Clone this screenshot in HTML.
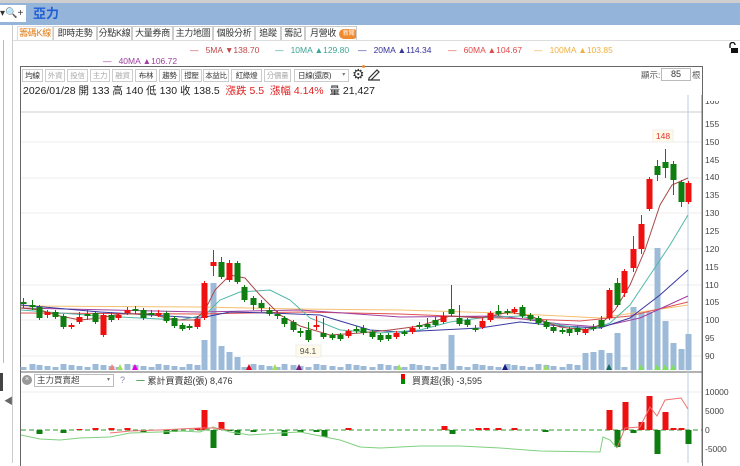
<!DOCTYPE html>
<html><head><meta charset="utf-8">
<style>
*{margin:0;padding:0;box-sizing:border-box}
body{width:740px;height:463px;overflow:hidden;background:#fff;font-family:"Liberation Sans","Noto Sans CJK TC",sans-serif;position:relative;color:#333}
.a{position:absolute;white-space:nowrap}
.tab{position:absolute;top:26px;height:15px;border:1px solid #ccc;border-bottom:none;font-size:9px;line-height:13px;text-align:center;color:#333;background:#fff;white-space:nowrap;overflow:hidden;letter-spacing:-0.3px}
.tb{position:absolute;top:69px;height:13px;border:1px solid #ccc;font-size:7.5px;line-height:11px;text-align:center;color:#333;background:#fff;white-space:nowrap;overflow:hidden;letter-spacing:-0.3px}
.g{color:#aaa}
.ml{font-size:8.5px;position:absolute;top:45px;white-space:nowrap}
.ax{position:absolute;left:705px;font-size:8.5px;color:#444}
</style></head><body>
<div class="a" style="left:0;top:0;width:740px;height:3px;background:#cfcfcf"></div>
<div class="a" style="left:0;top:3px;width:740px;height:22px;background:#95b4d9"></div>
<div class="a" style="left:0;top:5px;width:26px;height:17px;background:#fff;font-size:10px;line-height:17px">▾<span style="color:#557">🔍</span>+</div>
<div class="a" style="left:33px;top:5px;font-size:13px;font-weight:bold;color:#1f5fd6;line-height:17px">亞力</div>
<div class="a" style="left:3px;top:40px;width:1px;height:323px;background:#bbb"></div>
<div class="a" style="left:12px;top:25px;width:1px;height:438px;background:#ccc"></div>
<div class="a" style="left:0;top:373px;width:3px;height:18px;background:#444"></div>
<div class="a" style="left:4px;top:394px;font-size:9px;color:#666">◀</div>
<div class="tab" style="left:17px;width:36px;color:#e07a10;border-color:#ddd">籌碼K線</div>
<div class="tab" style="left:53px;width:44px">即時走勢</div>
<div class="tab" style="left:97px;width:35px">分點K線</div>
<div class="tab" style="left:132px;width:41px">大量券商</div>
<div class="tab" style="left:173px;width:40px">主力地圖</div>
<div class="tab" style="left:213px;width:42px">個股分析</div>
<div class="tab" style="left:255px;width:26px">追蹤</div>
<div class="tab" style="left:281px;width:24px">籌記</div>
<div class="tab" style="left:305px;width:52px;text-align:left;padding-left:4px">月營收<span style="display:inline-block;margin-left:3px;width:19px;height:10px;border-radius:5px;background:#f08a30;color:#fff;font-size:6px;line-height:10px;text-align:center;vertical-align:middle">新聞</span></div>
<div class="a" style="left:13px;top:40px;width:727px;height:1px;background:#ddd"></div>
<div class="ml" style="left:190px;color:#c04848">—&nbsp;&nbsp;&nbsp;5MA <span>▼</span>138.70</div>
<div class="ml" style="left:275px;color:#3aa593">—&nbsp;&nbsp;&nbsp;10MA ▲129.80</div>
<div class="ml" style="left:358px;color:#333399">—&nbsp;&nbsp;&nbsp;20MA ▲114.34</div>
<div class="ml" style="left:448px;color:#e04848">—&nbsp;&nbsp;&nbsp;60MA ▲104.67</div>
<div class="ml" style="left:534px;color:#f0b040">—&nbsp;&nbsp;&nbsp;100MA ▲103.85</div>
<div class="ml" style="left:103px;top:56px;color:#a040a0">—&nbsp;&nbsp;&nbsp;40MA ▲106.72</div>
<svg class="a" style="left:727px;top:42px" width="12" height="12"><path d="M3 6V3a2.5 2.5 0 0 1 5 0" fill="none" stroke="#111" stroke-width="1.3"/><rect x="4" y="6" width="7" height="5" fill="#111"/></svg>
<div class="a" style="left:20px;top:66px;width:683px;height:400px;border:1px solid #666;border-bottom:none"></div>
<div class="tb" style="left:22px;width:21px">均線</div>
<div class="tb g" style="left:45px;width:20px">外資</div>
<div class="tb g" style="left:67px;width:21px">投信</div>
<div class="tb g" style="left:90px;width:20px">主力</div>
<div class="tb g" style="left:112px;width:21px">融資</div>
<div class="tb" style="left:135px;width:22px">布林</div>
<div class="tb" style="left:159px;width:21px">趨勢</div>
<div class="tb" style="left:181px;width:21px">撐壓</div>
<div class="tb" style="left:203px;width:26px">本益比</div>
<div class="tb" style="left:231px;width:31px">紅綠燈</div>
<div class="tb g" style="left:264px;width:27px">分價量</div>
<div class="tb" style="left:294px;width:55px;text-align:left;padding-left:3px">日線(還原)<span style="position:absolute;right:3px;font-size:6px;color:#777">▾</span></div>
<div class="a" style="left:352px;top:66px;font-size:14px;color:#333">⚙</div>
<div class="a" style="left:362px;top:65px;width:3px;height:3px;border-radius:2px;background:#f08a30"></div>
<svg class="a" style="left:367px;top:67px" width="14" height="14"><path d="M2 11L10 3l2 2-8 8H2z M1 13h12" fill="none" stroke="#333" stroke-width="1.2"/></svg>
<div class="a" style="left:641px;top:69px;font-size:8.5px;color:#555">顯示:</div>
<div class="a" style="left:661px;top:68px;width:30px;height:13px;border:1px solid #bbb;font-size:9px;text-align:center;line-height:11px">85</div>
<div class="a" style="left:692px;top:69px;font-size:8.5px;color:#555">根</div>
<div class="a" style="left:23px;top:83px;font-size:10.5px;color:#222">2026/01/28 開 133 高 140 低 130 收 138.5 <span style="color:#e02020">&nbsp;漲跌 5.5&nbsp; 漲幅 4.14%</span>&nbsp; 量 21,427</div>
<div class="ax" style="top:101px;height:6px;overflow:hidden;line-height:0">160</div>
<div class="ax" style="top:119px">155</div><div class="ax" style="top:137px">150</div><div class="ax" style="top:155px">145</div>
<div class="ax" style="top:172px">140</div><div class="ax" style="top:190px">135</div><div class="ax" style="top:208px">130</div>
<div class="ax" style="top:226px">125</div><div class="ax" style="top:244px">120</div><div class="ax" style="top:262px">115</div>
<div class="ax" style="top:280px">110</div><div class="ax" style="top:297px">105</div><div class="ax" style="top:315px">100</div>
<div class="ax" style="top:333px">95</div><div class="ax" style="top:351px">90</div>
<div class="ax" style="top:387px">10000</div><div class="ax" style="top:406px">5000</div><div class="ax" style="top:425px">0</div><div class="ax" style="top:444px">-5000</div>
<div class="a" style="left:22px;top:375px;width:10px;height:10px;border-radius:5px;background:#999;color:#fff;font-size:7px;text-align:center;line-height:10px">×</div>
<div class="a" style="left:34px;top:374px;width:80px;height:13px;border:1px solid #bbb;font-size:8.5px;line-height:11px;padding-left:2px;color:#444">主力買賣超<span style="position:absolute;right:3px;font-size:6px;color:#777">▾</span></div>
<div class="a" style="left:120px;top:375px;font-size:9px;color:#88a">?</div>
<div class="a" style="left:136px;top:374px;font-size:9px;color:#333"><span style="color:#2a8a2a">一</span> 累計買賣超(張) 8,476</div>
<div class="a" style="left:401px;top:374px;width:4px;height:5px;background:#e00"></div>
<div class="a" style="left:401px;top:379px;width:4px;height:5px;background:#080"></div>
<div class="a" style="left:412px;top:374px;font-size:9px;color:#333">買賣超(張) -3,595</div>
<svg class="a" style="left:0;top:0" width="740" height="463" id="s">
<g stroke="#eee" stroke-width="1">
<line x1="21" y1="142" x2="702" y2="142"/><line x1="21" y1="178" x2="702" y2="178"/><line x1="21" y1="213" x2="702" y2="213"/><line x1="21" y1="249" x2="702" y2="249"/><line x1="21" y1="285" x2="702" y2="285"/><line x1="21" y1="320" x2="702" y2="320"/><line x1="21" y1="356" x2="702" y2="356"/><line x1="21" y1="392" x2="702" y2="392"/>
</g>
<line x1="21" y1="112" x2="702" y2="112" stroke="#ccc"/>
<line x1="702" y1="95" x2="702" y2="463" stroke="#777"/>
<line x1="21" y1="372" x2="702" y2="372" stroke="#666"/>
<line x1="688" y1="95" x2="688" y2="463" stroke="#b8cce0"/>
<g id="vol" fill="#9dbbd8"></g>
<g id="ma" fill="none" stroke-width="1"></g>
<g id="cd"></g>
<g id="low"></g>
<rect x="653" y="130" width="20" height="12" fill="#fffbe8" stroke="#eee"/>
<text x="663" y="139" font-size="8.5" fill="#e03030" text-anchor="middle" font-family="Liberation Sans">148</text>
<rect x="296" y="345" width="25" height="12" fill="#fffbe8" stroke="#eee"/>
<text x="308" y="354" font-size="8.5" fill="#555" text-anchor="middle" font-family="Liberation Sans">94.1</text>
</svg>
<script>
var NS="http://www.w3.org/2000/svg";
function el(p,t,a){var e=document.createElementNS(NS,t);for(var k in a)e.setAttribute(k,a[k]);document.getElementById(p).appendChild(e);return e;}
var C=[[23,302,304,'d',298,308],[32,305,307,'d',300,310],[39,307,318,'g',305,320],[47,312,315,'r',310,318],[55,312,317,'g',310,319],[63,316,327,'g',314,329],[71,325,327,'r',323,329],[79,317,322,'r',312,324],[87,314,316,'d',310,320],[95,313,322,'g',311,324],[103,315,335,'r',313,337],[111,315,320,'g',312,322],[118,315,318,'r',313,320],[127,310,313,'r',307,315],[135,309,311,'d',306,314],[143,310,318,'g',308,320],[151,313,315,'d',310,317],[158,313,315,'r',310,317],[166,313,321,'g',311,323],[174,318,326,'g',316,328],[182,325,329,'g',323,331],[189,326,328,'g',324,330],[197,319,327,'r',316,329],[204,283,318,'r',281,320],[213,262,266,'r',250,276],[221,262,277,'g',257,279],[229,263,280,'r',260,282],[237,263,282,'g',261,284],[244,287,300,'g',285,302],[253,298,305,'g',296,310],[261,303,308,'g',300,312],[269,310,314,'g',307,316],[277,314,316,'d',311,319],[284,318,324,'g',316,327],[293,322,330,'g',320,332],[300,331,333,'d',328,337],[308,330,340,'g',322,342],[316,325,327,'r',316,330],[323,333,337,'g',318,339],[332,335,338,'g',333,340],[340,335,339,'g',333,341],[348,331,336,'r',329,338],[356,329,331,'g',326,333],[363,328,333,'g',325,335],[372,332,337,'g',330,339],[380,335,340,'g',333,342],[388,335,339,'g',333,341],[396,333,337,'r',331,339],[404,332,334,'d',330,336],[412,328,332,'r',326,334],[419,325,327,'d',322,329],[427,324,327,'g',318,329],[435,320,325,'g',317,327],[443,316,322,'r',312,324],[451,309,314,'g',285,316],[459,318,324,'g',305,326],[467,320,325,'g',318,327],[475,328,330,'g',325,332],[482,321,327,'r',318,329],[490,313,320,'r',311,322],[498,311,314,'g',305,316],[507,311,313,'d',309,315],[514,309,312,'r',307,314],[522,307,316,'g',305,318],[530,315,319,'g',313,321],[538,318,323,'g',316,325],[546,322,327,'g',320,329],[553,327,331,'g',325,333],[562,330,332,'d',328,334],[569,329,333,'g',327,336],[577,328,332,'g',326,335],[585,329,333,'r',327,335],[593,327,329,'d',324,331],[601,320,327,'g',316,329],[609,290,318,'r',288,320],[617,283,305,'g',278,307],[624,271,293,'r',269,297],[633,249,268,'r',236,272],[641,224,249,'r',215,254],[649,179,209,'r',177,211],[657,166,175,'g',160,181],[665,162,168,'g',149,178],[673,164,180,'g',161,195],[681,182,202,'g',180,207],[688,183,202,'r',181,204]];
C.forEach(function(c){var col=c[3]=='r'?'#ef1010':'#0f7d0f';
el('cd','line',{x1:c[0]+0.5,x2:c[0]+0.5,y1:c[4],y2:c[5],stroke:col,'stroke-width':1});
var h=Math.max(2,c[2]-c[1]);el('cd','rect',{x:c[0]-2.5,y:c[1],width:6,height:h,fill:col});});
var V={204:30,213:87,221:24,229:18,237:13,451:35,585:17,593:18,601:20,609:17,617:37,625:57,633:63,641:58,649:58,657:122,665:49,673:27,681:21,688:36};
C.forEach(function(c,i){var h=V[c[0]]||(3+((i*7)%4));el('vol','rect',{x:c[0]-2.5,y:370-h,width:6,height:h});});
[[112,'#f08080'],[135,'#e000e0'],[120,'#a0e060'],[249,'#e0001f'],[275,'#a0e060'],[299,'#7a1a7a'],[399,'#9be060'],[505,'#1a1a80'],[546,'#9be060'],[609,'#1a6a60'],[641,'#7fe060'],[657,'#7fe060'],[665,'#7fe060'],[673,'#7fe060']].forEach(function(t){el('vol','path',{d:'M'+(t[0]-3)+' 370L'+t[0]+' 364L'+(t[0]+3)+' 370Z',fill:t[1]});});
function pl(pts,col){el('ma','polyline',{points:pts,stroke:col});}
pl("21,306 200,307 300,309 400,310 500,313 600,318 688,305","#f5c070");
pl("21,313 200,314 300,312 400,314 500,318 580,321 630,316 688,302","#e05050");
pl("21,308 200,312 300,310 400,317 500,316 560,324 600,327 640,318 688,296","#a040a0");
pl("21,305 100,312 200,318 230,312 270,313 320,315 370,330 400,332 440,330 480,328 520,322 560,326 600,328 630,318 660,295 688,270","#3838a0");
pl("21,310 100,316 180,320 205,315 220,300 240,292 270,290 290,300 310,318 340,330 380,333 420,330 450,322 480,318 520,316 560,325 590,330 610,323 630,305 650,275 670,245 688,215","#50b8a8");
pl("21,308 40,310 60,316 80,320 100,318 120,314 150,314 175,320 195,320 205,310 215,290 230,275 245,278 260,295 280,315 300,326 330,335 360,333 390,330 420,326 450,316 480,318 510,312 530,316 560,327 585,330 600,325 615,310 630,285 645,250 660,205 672,185 688,178","#a84848");
el('low','line',{x1:21,x2:702,y1:430,y2:430,stroke:'#2a9a2a','stroke-dasharray':'5,3','stroke-width':1});
var B=[[39,430,434,'g'],[63,430,433,'g'],[79,429,430,'r'],[95,428,430,'r'],[111,428,430,'r'],[127,428,430,'r'],[143,430,432,'g'],[166,430,434,'g'],[174,430,432,'g'],[197,428,430,'r'],[204,410,430,'r'],[213,430,448,'g'],[221,422,430,'r'],[229,430,431,'g'],[237,430,435,'g'],[253,430,432,'g'],[284,430,436,'g'],[300,430,432,'g'],[316,430,432,'g'],[324,430,437,'g'],[348,428,430,'r'],[444,426,430,'r'],[452,430,434,'g'],[478,428,430,'r'],[486,428,430,'r'],[498,428,430,'r'],[514,428,430,'r'],[545,430,432,'g'],[609,410,430,'r'],[617,430,447,'g'],[625,402,430,'r'],[633,430,433,'g'],[641,422,430,'r'],[649,396,430,'r'],[657,430,454,'g'],[665,412,430,'r'],[673,428,430,'r'],[681,428,430,'r'],[688,430,444,'g']];
B.forEach(function(b){el('low','rect',{x:b[0]-2.5,y:b[1],width:6,height:b[2]-b[1],fill:b[3]=='r'?'#ef1010':'#0f7d0f'});});
el('low','polyline',{points:"21,435 40,439 60,440 80,438 110,437 130,433 160,432 180,431 200,432 213,427 230,432 250,435 280,433 300,432 320,436 340,440 360,447 380,448 420,446 460,446 500,448 540,451 600,452 603,437 610,440 617,448",fill:'none',stroke:'#80d080','stroke-width':1});
el('low','polyline',{points:"110,433 130,431 160,430 200,428 213,428 230,430",fill:'none',stroke:'#f07070','stroke-width':1});
el('low','polyline',{points:"617,448 625,428 640,427 650,407 657,416 665,400 681,398 688,409",fill:'none',stroke:'#f07070','stroke-width':1});
</script>
</body></html>
